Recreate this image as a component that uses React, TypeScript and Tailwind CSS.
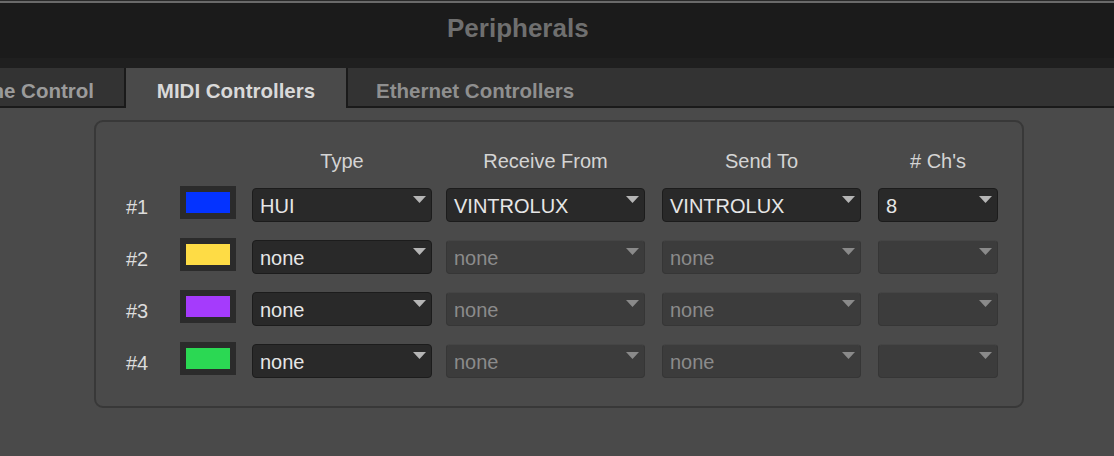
import React from "react";

type Row = {
  num: string;
  color: string;
  type: string;
  receive: string;
  send: string;
  chs: string;
  enabled: boolean;
};

const rows: Row[] = [
  { num: "#1", color: "bg-[#0433ff]", type: "HUI", receive: "VINTROLUX", send: "VINTROLUX", chs: "8", enabled: true },
  { num: "#2", color: "bg-[#fedc45]", type: "none", receive: "none", send: "none", chs: "", enabled: false },
  { num: "#3", color: "bg-[#a53bfc]", type: "none", receive: "none", send: "none", chs: "", enabled: false },
  { num: "#4", color: "bg-[#2bd853]", type: "none", receive: "none", send: "none", chs: "", enabled: false },
];

function Select({ value, enabled, width }: { value: string; enabled: boolean; width: string }) {
  return (
    <div
      className={`${width} h-[34px] flex rounded-[4px] border ${
        enabled
          ? "bg-[#292929] border-[#1c1c1c] text-[#e6e6e6]"
          : "bg-[#3c3c3c] border-[#363636] border-t-[#454545] text-[#8b8b8b]"
      }`}
    >
      <span className="flex-1 self-center pl-[7px] pt-[2px] text-[20px] leading-[24px] whitespace-nowrap">{value}</span>
      <svg width="13" height="7" viewBox="0 0 13 7" className="self-start mt-[7px] mr-[5px]">
        <polygon points="0,0 13,0 6.5,7" fill={enabled ? "#b5b5b5" : "#8a8a8a"} />
      </svg>
    </div>
  );
}

export default function App() {
  return (
    <div className="w-[1114px] h-[456px] overflow-hidden bg-[#4a4a4a] font-['Liberation_Sans',Arial,sans-serif]">
      {/* title bar */}
      <div className="h-px bg-[#2a2a2a]" />
      <div className="h-[2px] bg-[#6a6a6a]" />
      <div className="h-[55px] bg-[#1b1b1b] flex items-center pl-[447px] pb-[6px]">
        <span className="text-[26px] font-bold text-[#6f6f6f] leading-[30px]">Peripherals</span>
      </div>
      <div className="h-[10px] bg-[#1f1f1f]" />

      {/* tabs */}
      <div className="h-[40px] bg-[#333333] flex">
        <div className="w-[126px] h-[40px] flex justify-end items-center pr-[30px] pt-[8px] bg-[#333333] border-r-2 border-b-2 border-[#1a1a1a]">
          <span className="text-[20.5px] font-bold text-[#9b9b9b] whitespace-nowrap">Machine Control</span>
        </div>
        <div className="w-[220px] h-[40px] flex justify-center items-center pt-[6px] bg-[#4a4a4a]">
          <span className="text-[20.5px] font-bold text-[#d9d9d9] whitespace-nowrap">MIDI Controllers</span>
        </div>
        <div className="flex-1 h-[40px] flex items-center pl-[28px] pt-[8px] border-l-2 border-b-2 border-[#1a1a1a]">
          <span className="text-[20.5px] font-bold text-[#8f8f8f] whitespace-nowrap">Ethernet Controllers</span>
        </div>
      </div>

      {/* panel */}
      <div className="ml-[94px] mt-[12px] w-[930px] h-[288px] rounded-[9px] border-2 border-[#383838] pl-[30px] pt-[27px]">
        <div className="flex h-[24px] text-[20px] leading-[24px] text-[#d4d4d4]">
          <div className="w-[126px]" />
          <div className="w-[180px] text-center">Type</div>
          <div className="w-[199px] ml-[14px] text-center">Receive From</div>
          <div className="w-[199px] ml-[17px] text-center">Send To</div>
          <div className="w-[120px] ml-[17px] text-center">{"# Ch's"}</div>
        </div>
        <div className="mt-[15px] flex flex-col gap-[18px]">
          {rows.map((r) => (
            <div key={r.num} className="flex items-start h-[34px]">
              <div className="w-[54px] mt-[7px] text-[20px] leading-[24px] text-[#dcdcdc]">{r.num}</div>
              <div className="w-[56px] h-[33px] -mt-[2px] bg-[#2b2b2b] p-[6px]">
                <div className={`w-full h-full ${r.color}`} />
              </div>
              <div className="ml-[16px]">
                <Select value={r.type} enabled width="w-[180px]" />
              </div>
              <div className="ml-[14px]">
                <Select value={r.receive} enabled={r.enabled} width="w-[199px]" />
              </div>
              <div className="ml-[17px]">
                <Select value={r.send} enabled={r.enabled} width="w-[199px]" />
              </div>
              <div className="ml-[17px]">
                <Select value={r.chs} enabled={r.enabled} width="w-[120px]" />
              </div>
            </div>
          ))}
        </div>
      </div>
    </div>
  );
}
